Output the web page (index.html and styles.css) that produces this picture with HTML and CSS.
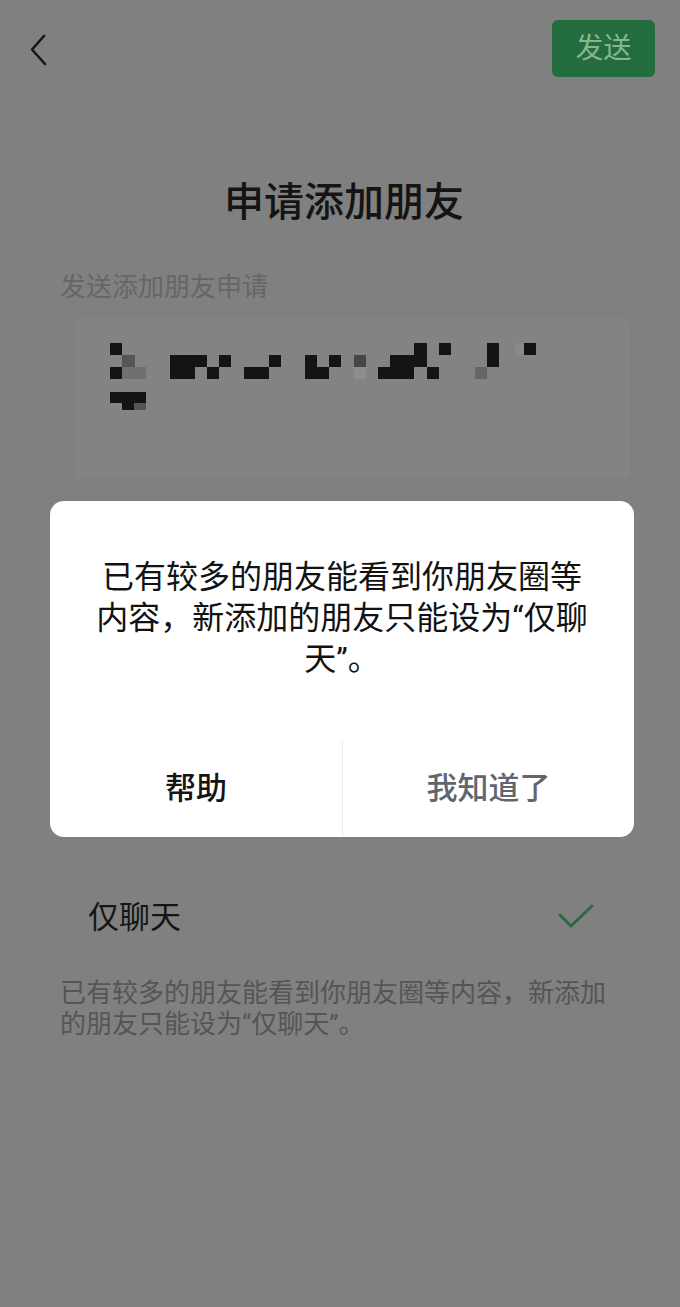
FILE: index.html
```html
<!DOCTYPE html>
<html lang="zh-CN">
<head>
<meta charset="utf-8">
<title>申请添加朋友</title>
<link rel="stylesheet" href="styles.css">
</head>
<body>
<div class="page">
  <header class="nav">
    <button class="back" aria-label="返回">
      <svg width="22" height="34" viewBox="0 0 22 34"><path d="M16 3 L4 16.5 L17 31" fill="none" stroke="#161616" stroke-width="2.6" stroke-linecap="round" stroke-linejoin="round"/></svg>
    </button>
    <button class="send">发送</button>
  </header>

  <h1 class="title">申请添加朋友</h1>

  <div class="label">发送添加朋友申请</div>
  <div class="input-box">
    <svg class="mosaic" width="440" height="75" viewBox="0 0 440 75">
      <g fill="#141414">
        <rect x="6" y="3" width="12" height="12"/>
        <rect x="310" y="3" width="13" height="12"/>
        <rect x="335" y="3" width="12" height="12"/>
        <rect x="383" y="3" width="12" height="24"/>
        <rect x="420" y="3" width="12" height="12"/>
        <rect x="66" y="15" width="37" height="12"/>
        <rect x="115" y="15" width="12" height="12"/>
        <rect x="165" y="15" width="12" height="12"/>
        <rect x="201" y="15" width="12" height="12"/>
        <rect x="225" y="15" width="12" height="12"/>
        <rect x="286" y="15" width="37" height="12"/>
        <rect x="6" y="27" width="12" height="12"/>
        <rect x="66" y="27" width="25" height="12"/>
        <rect x="103" y="27" width="12" height="12"/>
        <rect x="140" y="27" width="25" height="12"/>
        <rect x="201" y="27" width="24" height="12"/>
        <rect x="274" y="27" width="36" height="12"/>
        <rect x="323" y="27" width="12" height="12"/>
        <rect x="6" y="52" width="36" height="11"/>
        <rect x="18" y="63" width="12" height="7"/>
      </g>
      <rect x="18" y="15" width="13" height="12" fill="#555"/>
      <rect x="250" y="15" width="12" height="12" fill="#474747"/>
      <rect x="18" y="27" width="24" height="12" fill="#707070"/>
      <rect x="250" y="27" width="12" height="12" fill="#8c8c8c"/>
      <rect x="371" y="27" width="12" height="12" fill="#666"/>
      <rect x="30" y="63" width="12" height="7" fill="#555"/>
      <rect x="411" y="3" width="9" height="12" fill="#8a8a8a"/>
    </svg>
  </div>

  <div class="option-row">
    <span class="option-name">仅聊天</span>
    <svg class="check" width="38" height="28" viewBox="0 0 38 28"><path d="M3 12 L14 23 L35 3" fill="none" stroke="#2c6a40" stroke-width="3" stroke-linecap="round" stroke-linejoin="round"/></svg>
  </div>

  <p class="hint">已有较多的朋友能看到你朋友圈等内容，新添加的朋友只能设为“仅聊天”。</p>
</div>

<div class="dialog" role="dialog">
  <p class="dialog-msg">已有较多的朋友能看到你朋友圈等内容，新添加的朋友只能设为“仅聊天”。</p>
  <div class="dialog-actions">
    <button class="dlg-btn help">帮助</button>
    <button class="dlg-btn ok">我知道了</button>
  </div>
</div>
</body>
</html>
```

FILE: styles.css
```css
* { box-sizing: border-box; }

html, body {
  margin: 0;
  padding: 0;
}

body {
  background: #808080;
  font-family: Roboto, "Noto Sans CJK SC", "Noto Sans", sans-serif;
  color: #141414;
  width: 680px;
  height: 1307px;
  overflow: hidden;
}

button {
  font-family: inherit;
  border: none;
  background: none;
  padding: 0;
  margin: 0;
  cursor: pointer;
}

.page {
  display: flex;
  flex-direction: column;
}

.nav {
  display: flex;
  justify-content: space-between;
  align-items: flex-start;
  padding: 20px 25px 0 28px;
  height: 77px;
}

.back {
  margin-top: 13px;
  width: 22px;
  height: 34px;
  display: block;
}

.back svg { display: block; }

.send {
  width: 103px;
  height: 57px;
  border-radius: 6px;
  background: #236c3e;
  color: #87b68c;
  font-size: 28px;
  line-height: 57px;
  text-align: center;
}

.title {
  margin: 98px 0 0;
  font-size: 40px;
  line-height: 56px;
  font-weight: 500;
  text-align: center;
  padding-left: 8px;
  color: #141414;
}

.label {
  margin-top: 38px;
  padding-left: 60px;
  font-size: 26px;
  line-height: 36px;
  color: #666666;
}

.input-box {
  margin: 13px 0 0 75px;
  width: 555px;
  height: 160px;
  background: #838383;
  border-radius: 4px;
  padding: 22px 0 0 29px;
}

.mosaic { display: block; }

.option-row {
  margin-top: 392px;
  height: 96px;
  display: flex;
  align-items: center;
  justify-content: space-between;
  padding: 0 85px 0 88px;
}

.option-name {
  font-size: 31px;
  line-height: 40px;
  color: #151515;
}

.check {
  display: block;
  margin-top: -2px;
}

.hint {
  margin: 12px 0 0 60px;
  width: 560px;
  font-size: 26px;
  line-height: 31px;
  color: #555555;
}

.dialog {
  position: fixed;
  left: 50px;
  top: 501px;
  width: 584px;
  background: #ffffff;
  border-radius: 14px;
}

.dialog-msg {
  margin: 0;
  padding: 56px 42px 0;
  font-size: 32px;
  line-height: 41px;
  text-align: center;
  color: #121212;
}

.dialog-actions {
  margin-top: 60px;
  display: grid;
  grid-template-columns: 1fr 1fr;
  height: 97px;
}

.dlg-btn {
  font-size: 31px;
  font-weight: 500;
  line-height: 97px;
  text-align: center;
}

.help { color: #151515; }

.ok {
  color: #5f6670;
  border-left: 1px solid #ececec;
}
```
